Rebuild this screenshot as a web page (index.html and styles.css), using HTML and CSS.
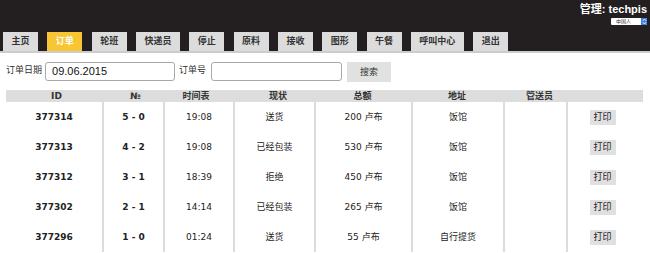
FILE: index.html
```html
<!DOCTYPE html>
<html lang="zh">
<head>
<meta charset="utf-8">
<title>订单</title>
<link rel="stylesheet" href="styles.css">
</head>
<body>
<header class="header">
  <div class="user-area">
    <div class="user-name">管理: techpis</div>
    <div class="lang-select"><span class="lang-text">中国人</span><span class="lang-arrow"><svg width="5" height="7" viewBox="0 0 5 7"><path d="M0.8 2.8 L2.5 1 L4.2 2.8 M0.8 4.2 L2.5 6 L4.2 4.2" fill="none" stroke="#fff" stroke-width="0.9"/></svg></span></div>
  </div>
  <nav class="tabs">
    <a class="tab">主页</a>
    <a class="tab tab-active">订单</a>
    <a class="tab">轮班</a>
    <a class="tab">快递员</a>
    <a class="tab">停止</a>
    <a class="tab">原料</a>
    <a class="tab">接收</a>
    <a class="tab">图形</a>
    <a class="tab">午餐</a>
    <a class="tab">呼叫中心</a>
    <a class="tab">退出</a>
  </nav>
</header>
<div class="rule"></div>

<form class="filter">
  <label class="filter-label label-date">订单日期</label>
  <div class="input input-date">09.06.2015</div>
  <label class="filter-label label-num">订单号</label>
  <div class="input input-num"></div>
  <div class="btn-search">搜索</div>
</form>

<table class="orders">
  <colgroup>
    <col class="c1"><col class="c2"><col class="c3"><col class="c4"><col class="c5"><col class="c6"><col class="c7"><col class="c8">
  </colgroup>
  <thead>
    <tr><th class="h-id">ID</th><th class="h-no">№</th><th class="h-time">时间表</th><th class="h-state">现状</th><th>总额</th><th>地址</th><th class="h-courier">管送员</th><th></th></tr>
  </thead>
  <tbody>
    <tr><td class="b">377314</td><td class="b">5 - 0</td><td>19:08</td><td>送货</td><td>200 <span class="cur">卢布</span></td><td>饭馆</td><td></td><td><span class="print">打印</span></td></tr>
    <tr><td class="b">377313</td><td class="b">4 - 2</td><td>19:08</td><td>已经包装</td><td>530 <span class="cur">卢布</span></td><td>饭馆</td><td></td><td><span class="print">打印</span></td></tr>
    <tr><td class="b">377312</td><td class="b">3 - 1</td><td>18:39</td><td>拒绝</td><td>450 <span class="cur">卢布</span></td><td>饭馆</td><td></td><td><span class="print">打印</span></td></tr>
    <tr><td class="b">377302</td><td class="b">2 - 1</td><td>14:14</td><td>已经包装</td><td>265 <span class="cur">卢布</span></td><td>饭馆</td><td></td><td><span class="print">打印</span></td></tr>
    <tr><td class="b">377296</td><td class="b">1 - 0</td><td>01:24</td><td>送货</td><td>55 <span class="cur">卢布</span></td><td>自行提货</td><td></td><td><span class="print">打印</span></td></tr>
  </tbody>
</table>
</body>
</html>
```

FILE: styles.css
```css
html, body {
  margin: 0;
  padding: 0;
  background: #ffffff;
  font-family: "DejaVu Sans", "Noto Sans CJK SC", sans-serif;
  color: #222;
}

.header {
  height: 51px;
  background: #231f20;
  display: flex;
  flex-direction: column;
}

.user-area {
  height: 32px;
  display: flex;
  flex-direction: column;
  align-items: flex-end;
  padding-right: 3px;
  box-sizing: border-box;
  padding-top: 3px;
}

.user-name {
  font-family: "Liberation Sans", "Noto Sans CJK SC", sans-serif;
  font-weight: bold;
  font-size: 11px;
  line-height: 12px;
  color: #ffffff;
}

.lang-select {
  margin-top: 3px;
  width: 36px;
  height: 7px;
  background: #fff;
  border-radius: 1px;
  display: flex;
  align-items: center;
  justify-content: space-between;
  overflow: hidden;
}

.lang-text {
  font-size: 5px;
  line-height: 7px;
  color: #333;
  padding-left: 5px;
}

.lang-arrow {
  width: 6px;
  height: 7px;
  background: #3a7fe0;
  display: flex;
  align-items: center;
  justify-content: center;
}

.tabs {
  display: flex;
  gap: 9.3px;
  padding-left: 3px;
  height: 19px;
}

.tab {
  display: block;
  height: 19px;
  padding: 0 8.5px;
  background: #dcdcdc;
  color: #333;
  font-weight: bold;
  font-size: 9px;
  line-height: 19px;
  text-align: center;
}

.tab-active {
  background: #f8c633;
  color: #ffffff;
}

.rule {
  height: 2px;
  background: #cccccc;
}

.filter {
  margin: 9px 0 0 0;
  padding-left: 6px;
  display: flex;
  align-items: flex-start;
  height: 20px;
}

.filter-label {
  font-size: 9px;
  line-height: 12px;
  margin-top: 2px;
  color: #333;
}

.label-date {
  margin-right: 3px;
}

.label-num {
  margin-left: 4px;
  margin-right: 5px;
}

.input {
  box-sizing: border-box;
  height: 19px;
  border: 1px solid #a8a8a8;
  border-radius: 3px;
  background: #fff;
  font-family: "Liberation Sans", sans-serif;
  font-size: 11px;
  line-height: 17px;
  padding-left: 6px;
  color: #111;
}

.input-date {
  width: 130px;
}

.input-num {
  width: 131px;
}

.btn-search {
  margin-left: 5px;
  width: 44px;
  height: 20px;
  background: #e1e1e1;
  font-size: 9px;
  line-height: 20px;
  text-align: center;
  color: #333;
}

.orders {
  margin: 8px 0 0 6px;
  width: 637px;
  table-layout: fixed;
  border-collapse: separate;
  border-spacing: 0;
  font-size: 9px;
}

.c1 { width: 96px; }
.c2 { width: 61px; }
.c3 { width: 70px; }
.c4 { width: 81px; }
.c5 { width: 97px; }
.c6 { width: 92px; }
.c7 { width: 63px; }
.c8 { width: 77px; }

.orders th {
  background: #dddddd;
  height: 12px;
  padding: 0;
  font-weight: bold;
  font-size: 9px;
  line-height: 12px;
  color: #333;
  text-align: center;
}

.orders th.h-id { padding-left: 5px; }
.orders th.h-no { padding-left: 6px; }
.orders th.h-time { padding-right: 4px; }
.orders th.h-state { padding-left: 9px; }
.orders th.h-courier { padding-left: 10px; }

.orders td {
  height: 30px;
  padding: 0;
  text-align: center;
  vertical-align: middle;
  line-height: 12px;
  color: #222;
}

.orders td + td {
  border-left: 2px solid #dcdcdc;
}

.orders td.b {
  font-weight: bold;
}

.cur {
  font-size: 9px;
}

.print {
  display: inline-block;
  width: 26px;
  height: 15px;
  line-height: 15px;
  background: #e0e0e0;
  font-size: 9px;
  color: #222;
  margin-right: 6px;
}
```
